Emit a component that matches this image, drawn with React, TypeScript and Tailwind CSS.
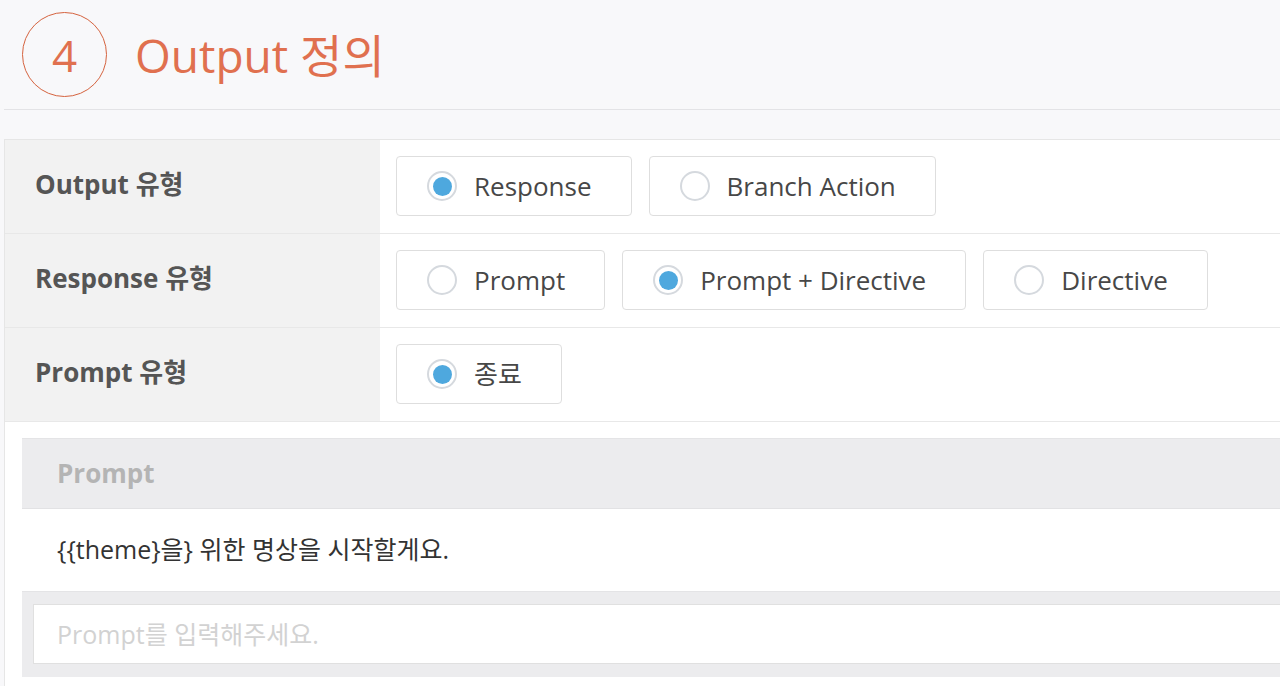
import React from 'react'

type Option = { label: string; checked?: boolean }

const rows: { title: string; options: Option[] }[] = [
  { title: 'Output 유형', options: [{ label: 'Response', checked: true }, { label: 'Branch Action' }] },
  {
    title: 'Response 유형',
    options: [{ label: 'Prompt' }, { label: 'Prompt + Directive', checked: true }, { label: 'Directive' }],
  },
  { title: 'Prompt 유형', options: [{ label: '종료', checked: true }] },
]

function Radio({ label, checked }: Option) {
  return (
    <label className="h-[60px] flex items-center pl-[30px] pr-[39px] border border-[#dedede] rounded-[4px] bg-white">
      <span className="w-[30px] h-[30px] rounded-full border-2 border-[#d5d9de] flex items-center justify-center shrink-0">
        {checked && <span className="w-[19px] h-[19px] rounded-full bg-[#4ea8de]" />}
      </span>
      <span className="ml-[17px] text-[26px] text-[#474747] leading-none">{label}</span>
    </label>
  )
}

export default function App() {
  return (
    <div className="min-h-screen overflow-hidden bg-[#f8f8fa] font-['Open_Sans','Noto_Sans_CJK_KR',sans-serif]">
      <div className="ml-[4px] w-[1300px]">
        {/* section title */}
        <header className="h-[110px] border-b border-[#e3e3e6] flex items-center pl-[18px]">
          <div className="w-[85px] h-[85px] rounded-full border-[1.5px] border-[#d5633f] flex items-center justify-center text-[44px] text-[#e0704f] leading-none">
            4
          </div>
          <h1 className="ml-[28px] text-[46px] text-[#e0704f] leading-none">Output 정의</h1>
        </header>

        <div className="mt-[29px] border border-[#e6e6e6] bg-white">
          {rows.map(row => (
            <div key={row.title} className="grid grid-cols-[375px_1fr] border-b border-[#e8e8e8]">
              <div className="bg-[#f2f2f2] flex items-center pl-[30px] pb-[4px] text-[26px] font-bold text-[#555]">
                {row.title}
              </div>
              <div className="flex gap-[17px] px-[16px] pt-[16px] pb-[17px]">
                {row.options.map(o => (
                  <Radio key={o.label} {...o} />
                ))}
              </div>
            </div>
          ))}

          <div className="pl-[17px] pt-[16px] pb-[10px]">
            <div className="bg-[#ececee] border-t border-[#e4e4e6]">
              <div className="h-[70px] flex items-center pl-[35px] text-[26px] font-bold text-[#b4b4b4] border-b border-[#e2e2e4]">
                Prompt
              </div>
              <div className="h-[82px] bg-white flex items-center pl-[35px] text-[25px] text-[#333]">
                {'{{theme}을} 위한 명상을 시작할게요.'}
              </div>
              <div className="border-t border-[#e4e4e6] pt-[12px] pb-[13px] pl-[11px]">
                <input
                  className="w-full h-[60px] bg-white border border-[#e0e0e0] pl-[23px] text-[25px] text-[#333] placeholder:text-[#d2d2d2] outline-none"
                  placeholder="Prompt를 입력해주세요."
                />
              </div>
            </div>
          </div>
        </div>
      </div>
    </div>
  )
}
